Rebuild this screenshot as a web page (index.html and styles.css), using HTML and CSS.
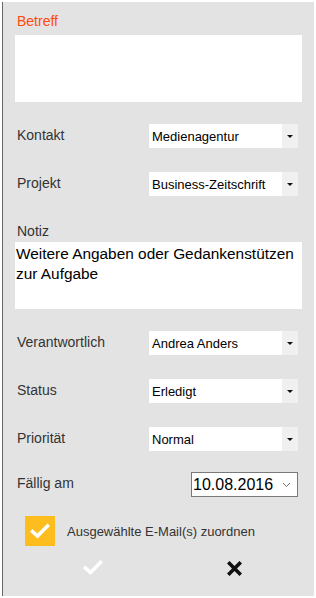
FILE: index.html
```html
<!DOCTYPE html>
<html lang="de">
  <head>
    <meta charset="UTF-8" />
    <meta name="viewport" content="width=device-width, initial-scale=1.0" />
    <title>Aufgabe</title>
    <link rel="stylesheet" href="styles.css">
  </head>
  <body>
    <div class="panel">
      <div class="field-label subject">Betreff</div>
      <div class="textbox"></div>

      <div class="row first">
        <div class="row-label">Kontakt</div>
        <div class="dropdown"><span>Medienagentur</span><span class="arrow"></span></div>
      </div>

      <div class="row">
        <div class="row-label">Projekt</div>
        <div class="dropdown"><span>Business-Zeitschrift</span><span class="arrow"></span></div>
      </div>

      <div class="field-label note-label">Notiz</div>
      <div class="textbox note">Weitere Angaben oder Gedankenstützen<br>zur Aufgabe</div>

      <div class="row first">
        <div class="row-label">Verantwortlich</div>
        <div class="dropdown"><span>Andrea Anders</span><span class="arrow"></span></div>
      </div>

      <div class="row">
        <div class="row-label">Status</div>
        <div class="dropdown"><span>Erledigt</span><span class="arrow"></span></div>
      </div>

      <div class="row">
        <div class="row-label">Priorität</div>
        <div class="dropdown"><span>Normal</span><span class="arrow"></span></div>
      </div>

      <div class="date-row">
        <div class="row-label">Fällig am</div>
        <div class="date-input">
          <span>10.08.2016</span>
          <svg width="9" height="6" viewBox="0 0 9 6"><path d="M1 1 L4.5 4.5 L8 1" fill="none" stroke="#6d6d6d" stroke-width="1"/></svg>
        </div>
      </div>

      <div class="check-row">
        <div class="checkbox">
          <svg width="20" height="16" viewBox="0 0 20 16"><path d="M2.5 8.5 L7.5 13 L17.5 3" fill="none" stroke="#fff" stroke-width="3.6" stroke-linecap="square"/></svg>
        </div>
        <span>Ausgewählte E-Mail(s) zuordnen</span>
      </div>

      <div class="actions">
        <button class="action ok">
          <svg width="20" height="16" viewBox="0 0 20 16"><path d="M2.5 8 L7.5 12.5 L17.5 2.5" fill="none" stroke="#fff" stroke-width="3.6" stroke-linecap="square"/></svg>
        </button>
        <button class="action cancel">
          <svg width="15" height="15" viewBox="0 0 15 15"><path d="M2.5 2.5 L12.5 12.5 M12.5 2.5 L2.5 12.5" fill="none" stroke="#111" stroke-width="3.6" stroke-linecap="square"/></svg>
        </button>
      </div>
    </div>
  </body>
</html>
```

FILE: styles.css
```css
* {
  margin: 0;
  padding: 0;
  box-sizing: border-box;
}

body {
  font-family: "Liberation Sans", Arial, sans-serif;
  background: #ffffff;
  padding: 2px 2px 2px 2px;
}

.panel {
  width: 312px;
  height: 594px;
  background: #e3e3e3;
  border-left: 1px solid #666666;
  padding: 11px 11px 0 12px;
  display: flex;
  flex-direction: column;
}

.field-label {
  font-size: 14px;
  line-height: 16px;
  color: #333333;
  padding-left: 2px;
}

.subject {
  color: #ff4a0f;
  margin-bottom: 6px;
}

.textbox {
  background: #ffffff;
  height: 67px;
  width: 287px;
}

.note-label {
  margin-top: 27px;
  margin-bottom: 3px;
}

.note {
  font-size: 15.4px;
  line-height: 20px;
  color: #000000;
  padding: 2px 0 0 1px;
  white-space: nowrap;
}

.row {
  display: grid;
  grid-template-columns: 134px 149px;
  align-items: center;
  height: 24px;
  margin-top: 24px;
}

.row.first {
  margin-top: 22px;
}

.row-label {
  font-size: 14px;
  line-height: 16px;
  color: #333333;
  padding-left: 2px;
  margin-top: -3px;
}

.dropdown {
  height: 24px;
  background: #ffffff;
  display: flex;
  align-items: center;
  justify-content: space-between;
  font-size: 13px;
  color: #000000;
  padding-left: 3px;
}

.arrow {
  width: 16px;
  height: 24px;
  background: #f0f0f0;
  display: flex;
  align-items: center;
  justify-content: center;
}

.arrow::after {
  content: "";
  border-left: 3px solid transparent;
  border-right: 3px solid transparent;
  border-top: 3px solid #111111;
}

.date-row {
  display: flex;
  align-items: center;
  justify-content: space-between;
  width: 283px;
  height: 25px;
  margin-top: 21px;
}

.date-input {
  width: 107px;
  height: 25px;
  background: #ffffff;
  border: 1px solid #7a7a7a;
  display: flex;
  align-items: center;
  justify-content: space-between;
  padding: 0 6px 0 1px;
  font-size: 16px;
  color: #000000;
}

.check-row {
  display: flex;
  align-items: center;
  gap: 12px;
  margin-top: 19px;
  padding-left: 10px;
  font-size: 13px;
  color: #333333;
}

.checkbox {
  width: 30px;
  height: 30px;
  background: #fdbd1f;
  display: flex;
  align-items: center;
  justify-content: center;
}

.actions {
  display: flex;
  margin-top: 14px;
  padding-left: 68px;
  gap: 124px;
}

.action {
  background: none;
  border: none;
  display: flex;
  align-items: center;
  justify-content: center;
  cursor: pointer;
}
```
